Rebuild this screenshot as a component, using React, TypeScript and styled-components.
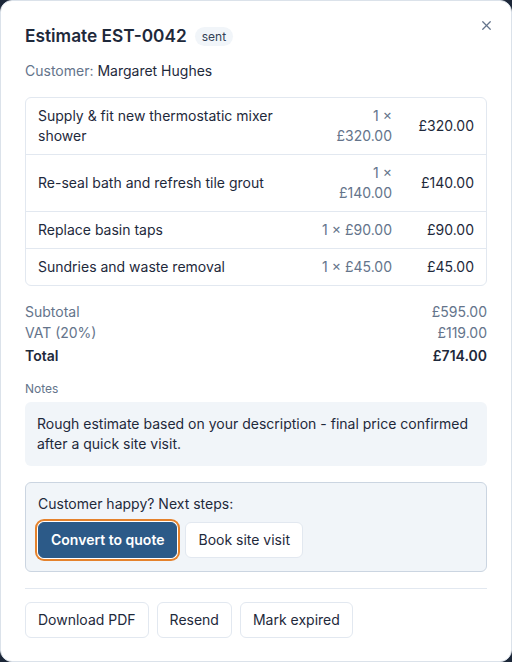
import styled, { createGlobalStyle } from "styled-components";
import { X } from "lucide-react";

interface LineItem {
  description: string;
  qty: string;
  total: string;
}

const items: LineItem[] = [
  { description: "Supply & fit new thermostatic mixer shower", qty: "1 × £320.00", total: "£320.00" },
  { description: "Re-seal bath and refresh tile grout", qty: "1 × £140.00", total: "£140.00" },
  { description: "Replace basin taps", qty: "1 × £90.00", total: "£90.00" },
  { description: "Sundries and waste removal", qty: "1 × £45.00", total: "£45.00" },
];

export default function App() {
  return (
    <>
      <GlobalStyle />
      <StDialog>
        <StClose aria-label="Close">
          <X size={15} strokeWidth={2} />
        </StClose>

        <StHeader>
          <h2>Estimate EST-0042</h2>
          <StBadge>sent</StBadge>
        </StHeader>

        <StCustomer>
          <span>Customer:</span> Margaret Hughes
        </StCustomer>

        <StTable>
          {items.map((item) => (
            <StRow key={item.description}>
              <StDesc>{item.description}</StDesc>
              <StQty>{item.qty}</StQty>
              <StTotal>{item.total}</StTotal>
            </StRow>
          ))}
        </StTable>

        <StSummary>
          <StSumRow>
            <span>Subtotal</span>
            <span>£595.00</span>
          </StSumRow>
          <StSumRow>
            <span>VAT (20%)</span>
            <span>£119.00</span>
          </StSumRow>
          <StSumRow $strong>
            <span>Total</span>
            <span>£714.00</span>
          </StSumRow>
        </StSummary>

        <StNotesLabel>Notes</StNotesLabel>
        <StNotes>
          Rough estimate based on your description - final price confirmed
          after a quick site visit.
        </StNotes>

        <StNextSteps>
          <p>Customer happy? Next steps:</p>
          <StButtonRow>
            <StButton $primary>Convert to quote</StButton>
            <StButton>Book site visit</StButton>
          </StButtonRow>
        </StNextSteps>

        <StDivider />

        <StButtonRow>
          <StButton>Download PDF</StButton>
          <StButton>Resend</StButton>
          <StButton>Mark expired</StButton>
        </StButtonRow>
      </StDialog>
    </>
  );
}

const GlobalStyle = createGlobalStyle`
  * { box-sizing: border-box; }
  body {
    margin: 0;
    background: #1c2738;
    font-family: Inter, "Noto Sans", sans-serif;
    color: #1e293b;
  }
`;

const StDialog = styled.section`
  position: relative;
  width: 512px;
  height: 662px;
  background: #ffffff;
  border: 1px solid #dbe2ea;
  border-radius: 12px;
  padding: 24px;
  display: flex;
  flex-direction: column;
`;

const StClose = styled.button`
  position: absolute;
  top: 17px;
  right: 17px;
  display: flex;
  padding: 0;
  border: none;
  background: none;
  color: #64748b;
`;

const StHeader = styled.div`
  display: flex;
  align-items: center;
  gap: 8px;
  height: 22px;

  & > h2 {
    margin: 0;
    font-size: 17.3px;
    font-weight: 600;
    line-height: 22px;
    color: #1e293b;
  }
`;

const StBadge = styled.span`
  background: #f1f5f9;
  border-radius: 999px;
  padding: 2px 7px;
  font-size: 12px;
  line-height: 15px;
  color: #334155;
`;

const StCustomer = styled.p`
  margin: 14px 0 0;
  font-size: 14px;
  line-height: 20px;
  color: #1e293b;

  & > span {
    color: #64748b;
  }
`;

const StTable = styled.div`
  margin-top: 16px;
  border: 1px solid #e2e8f0;
  border-radius: 6px;
`;

const StRow = styled.div`
  display: grid;
  grid-template-columns: 1fr 72px 66px;
  column-gap: 16px;
  align-items: center;
  padding: 8px 12px;
  font-size: 14px;
  line-height: 20px;

  & + & {
    border-top: 1px solid #e2e8f0;
  }
`;

const StDesc = styled.span`
  color: #1e293b;
`;

const StQty = styled.span`
  text-align: right;
  color: #64748b;
`;

const StTotal = styled.span`
  text-align: right;
  color: #1e293b;
`;

const StSummary = styled.div`
  margin-top: 16px;
  display: flex;
  flex-direction: column;
  gap: 1px;
`;

const StSumRow = styled.div<{ $strong?: boolean }>`
  display: flex;
  justify-content: space-between;
  font-size: 14px;
  line-height: 20px;
  margin-top: ${({ $strong }) => ($strong ? "2px" : "0")};
  font-weight: ${({ $strong }) => ($strong ? 600 : 400)};
  color: ${({ $strong }) => ($strong ? "#1e293b" : "#64748b")};
`;

const StNotesLabel = styled.p`
  margin: 15px 0 0;
  font-size: 12px;
  line-height: 16px;
  color: #64748b;
`;

const StNotes = styled.p`
  margin: 5px 0 0;
  padding: 12px;
  background: #f1f5f9;
  border-radius: 6px;
  font-size: 14px;
  line-height: 20px;
  color: #1e293b;
`;

const StNextSteps = styled.div`
  margin-top: 16px;
  padding: 11px 12px 13px;
  background: #f1f5f9;
  border: 1px solid #cbd5e1;
  border-radius: 6px;

  & > p {
    margin: 0 0 8px;
    font-size: 14px;
    line-height: 20px;
    font-weight: 400;
    color: #1e293b;
  }
`;

const StButtonRow = styled.div`
  display: flex;
  gap: 8px;
`;

const StButton = styled.button<{ $primary?: boolean }>`
  font-family: Inter, "Noto Sans", sans-serif;
  font-size: 14px;
  line-height: 20px;
  padding: 7px 12px;
  border-radius: 6px;
  border: 1px solid ${({ $primary }) => ($primary ? "#2c5a88" : "#e2e8f0")};
  background: ${({ $primary }) => ($primary ? "#2c5a88" : "#ffffff")};
  color: ${({ $primary }) => ($primary ? "#ffffff" : "#1e293b")};
  font-weight: ${({ $primary }) => ($primary ? 600 : 400)};
  box-shadow: ${({ $primary }) =>
    $primary ? "0 0 0 1px #ffffff, 0 0 0 3px #e5822c" : "none"};
`;

const StDivider = styled.hr`
  margin: 16px 0 13px;
  border: none;
  border-top: 1px solid #e2e8f0;
`;
